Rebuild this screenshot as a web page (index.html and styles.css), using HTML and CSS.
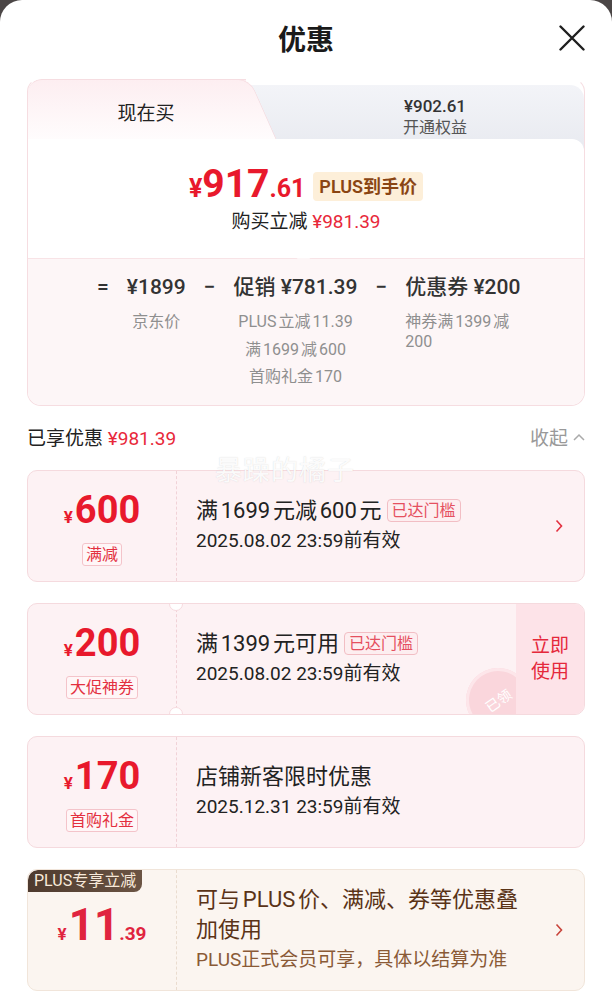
FILE: index.html
```html
<!DOCTYPE html>
<html lang="zh-CN">
<head>
    <meta charset="UTF-8">
    <title>优惠</title>
    <link rel="stylesheet" href="styles.css">
</head>
<body>
    <div class="sheet">
        <header class="header">
            <h1 class="title">优惠</h1>
            <button class="close" aria-label="关闭">
                <svg viewBox="0 0 26 26" width="26" height="26"><path d="M1.5 1.5L24.5 24.5M24.5 1.5L1.5 24.5" stroke="#1f1f1f" stroke-width="2.4" stroke-linecap="round"/></svg>
            </button>
        </header>

        <section class="summary">
            <div class="tabs">
                <div class="tab-now">现在买</div>
                <div class="tab-plus">
                    <span class="tab-price">¥902.61</span>
                    <span class="tab-sub">开通权益</span>
                </div>
            </div>
            <div class="price-panel">
                <div class="price-line">
                    <span class="price"><span class="cur">¥</span>917<span class="dec">.61</span></span>
                    <span class="plus-badge">PLUS到手价</span>
                </div>
                <div class="save-line">购买立减 <span class="red">¥981.39</span></div>
            </div>
            <div class="breakdown">
                <span class="op">=</span>
                <div class="term">
                    <div class="term-main">¥1899</div>
                    <div class="term-sub">京东价</div>
                </div>
                <span class="op">−</span>
                <div class="term">
                    <div class="term-main">促销 ¥781.39</div>
                    <div class="term-sub">PLUS立减11.39</div>
                    <div class="term-sub">满1699减600</div>
                    <div class="term-sub">首购礼金170</div>
                </div>
                <span class="op">−</span>
                <div class="term term-left">
                    <div class="term-main">优惠券 ¥200</div>
                    <div class="term-sub term-wrap">神券满1399减200</div>
                </div>
            </div>
        </section>

        <div class="enjoyed">
            <span>已享优惠 <span class="red">¥981.39</span></span>
            <span class="collapse">收起
                <svg viewBox="0 0 12 8" width="12" height="8"><path d="M1 7L6 2L11 7" fill="none" stroke="#aaa" stroke-width="1.5"/></svg>
            </span>
        </div>

        <div class="watermark">暴躁的橘子</div>

        <div class="coupons">
            <div class="coupon">
                <div class="c-left">
                    <div class="amount"><span class="cur">¥</span>600</div>
                    <span class="c-tag">满减</span>
                </div>
                <div class="c-body">
                    <div class="c-title">满1699元减600元<span class="reach">已达门槛</span></div>
                    <div class="c-date">2025.08.02 23:59前有效</div>
                </div>
                <div class="c-arrow">
                    <svg viewBox="0 0 8 14" width="8" height="14"><path d="M1.5 1.5L6.5 7L1.5 12.5" fill="none" stroke="#e3303f" stroke-width="1.6"/></svg>
                </div>
            </div>

            <div class="coupon">
                <div class="c-left notched">
                    <div class="amount"><span class="cur">¥</span>200</div>
                    <span class="c-tag">大促神券</span>
                </div>
                <div class="c-body">
                    <div class="c-title">满1399元可用<span class="reach">已达门槛</span></div>
                    <div class="c-date">2025.08.02 23:59前有效</div>
                    <div class="stamp"><span>已领</span></div>
                </div>
                <div class="c-action">立即<br>使用</div>
            </div>

            <div class="coupon">
                <div class="c-left">
                    <div class="amount"><span class="cur">¥</span>170</div>
                    <span class="c-tag">首购礼金</span>
                </div>
                <div class="c-body">
                    <div class="c-title">店铺新客限时优惠</div>
                    <div class="c-date">2025.12.31 23:59前有效</div>
                </div>
            </div>

            <div class="coupon plus">
                <span class="plus-tag">PLUS专享立减</span>
                <div class="c-left">
                    <div class="amount"><span class="cur">¥</span>11<span class="dec">.39</span></div>
                </div>
                <div class="c-body">
                    <div class="c-title">可与PLUS价、满减、券等优惠叠加使用</div>
                    <div class="c-sub">PLUS正式会员可享，具体以结算为准</div>
                </div>
                <div class="c-arrow">
                    <svg viewBox="0 0 8 14" width="8" height="14"><path d="M1.5 1.5L6.5 7L1.5 12.5" fill="none" stroke="#c8433a" stroke-width="1.6"/></svg>
                </div>
            </div>
        </div>
    </div>
</body>
</html>
```

FILE: styles.css
```css
* {
    box-sizing: border-box;
}
body {
    margin: 0;
    background: #4b4646;
    font-family: Roboto, "Noto Sans CJK SC", sans-serif;
    color: #222;
    text-autospace: normal;
}
.sheet {
    position: relative;
    min-height: 1000px;
    background: #fff;
    border-radius: 22px 22px 0 0;
    overflow: hidden;
}
.header {
    display: grid;
    grid-template-columns: 1fr auto 1fr;
    align-items: center;
    height: 75px;
    padding: 0 27px;
}
.title {
    grid-column: 2;
    margin: 0;
    font-size: 28px;
    font-weight: 700;
    color: #1a1a1a;
}
.close {
    justify-self: end;
    width: 26px;
    height: 26px;
    padding: 0;
    border: 0;
    background: none;
}
.red {
    color: #e8283a;
}

/* summary card */
.summary {
    margin: 3px 27px 0;
    border: 1px solid #f6dde1;
    border-top-color: transparent;
    border-radius: 14px;
    overflow: hidden;
    background: #fff;
}
.tabs {
    display: flex;
    height: 72px;
}
.tab-now {
    position: relative;
    z-index: 1;
    width: 218px;
    padding: 21px 0 0 18px;
    text-align: center;
    font-size: 19px;
    line-height: 26px;
    background: linear-gradient(180deg, #fdeef1, #fff);
    border-top: 1px solid #f6dde1;
    border-radius: 14px 0 0 0;
}
.tab-now::after {
    content: '';
    position: absolute;
    top: -1px;
    bottom: 0;
    right: -20px;
    width: 40px;
    background: linear-gradient(180deg, #fdeef1, #fff);
    border-top: 1px solid #f6dde1;
    border-right: 1px solid #f6dde1;
    border-radius: 0 12px 0 0;
    transform: skewX(24deg);
    z-index: -1;
}
.tab-plus {
    flex: 1;
    margin-top: 6px;
    padding: 10px 0 0 40px;
    display: flex;
    flex-direction: column;
    align-items: center;
    background: linear-gradient(180deg, #f3f4f8, #e8eaf0);
    border-radius: 0 14px 0 0;
}
.tab-price {
    font-size: 17px;
    line-height: 22px;
    font-weight: 500;
    color: #333;
}
.tab-sub {
    font-size: 16px;
    line-height: 22px;
    color: #555;
}
.price-panel {
    position: relative;
    z-index: 2;
    margin-top: -12px;
    padding: 27px 0 22px;
    text-align: center;
    background: #fff;
    border-radius: 0 12px 0 0;
}
.price-line {
    display: flex;
    justify-content: center;
    align-items: center;
    gap: 8px;
    height: 40px;
}
.price {
    color: #e8192c;
    font-weight: 700;
    font-size: 39px;
    line-height: 40px;
}
.price .cur,
.price .dec {
    font-size: 25px;
}
.plus-badge {
    height: 29px;
    padding: 0 6px;
    font-size: 18px;
    line-height: 29px;
    font-weight: 600;
    color: #8a4513;
    background: #fdefd9;
    border-radius: 4px;
    text-autospace: no-autospace;
}
.save-line {
    margin-top: 2px;
    font-size: 19px;
    line-height: 28px;
}
.breakdown {
    position: relative;
    display: flex;
    gap: 18px;
    padding: 14px 0 14px 69px;
    background: #fdf6f7;
    border-top: 1px solid #f8e3e6;
}
.breakdown::before {
    content: '';
    position: absolute;
    left: 270px;
    top: -6px;
    width: 10px;
    height: 10px;
    background: #fdf6f7;
    border-left: 1px solid #f8e3e6;
    border-top: 1px solid #f8e3e6;
    transform: rotate(45deg);
}
.op,
.term-main {
    font-size: 21px;
    line-height: 28px;
    font-weight: 500;
    color: #333;
}
.term {
    display: flex;
    flex-direction: column;
    align-items: center;
}
.term-left {
    align-items: flex-start;
}
.term-sub {
    font-size: 16px;
    line-height: 27.5px;
    color: #8f8f8f;
}
.term-main + .term-sub {
    margin-top: 7px;
}
.term-sub.term-wrap {
    width: 106px;
    margin-top: 11px;
    line-height: 20px;
}

/* enjoyed row */
.enjoyed {
    display: flex;
    justify-content: space-between;
    align-items: center;
    height: 30px;
    margin: 16px 27px 0;
    font-size: 19px;
}
.collapse {
    display: flex;
    align-items: center;
    gap: 5px;
    color: #999;
}
.watermark {
    position: absolute;
    left: 215px;
    top: 449px;
    z-index: 3;
    font-size: 27px;
    letter-spacing: 1px;
    color: rgba(255, 255, 255, 0.92);
    text-shadow: 0 0 1px rgba(140, 140, 140, 0.35);
}

/* coupons */
.coupons {
    display: flex;
    flex-direction: column;
    gap: 21px;
    margin: 18px 27px 0;
}
.coupon {
    position: relative;
    display: flex;
    height: 112px;
    background: #fdf2f4;
    border: 1px solid #f5dade;
    border-radius: 10px;
    overflow: hidden;
}
.c-left {
    position: relative;
    width: 149px;
    padding-top: 4px;
    display: flex;
    flex-direction: column;
    align-items: center;
    justify-content: center;
    gap: 6px;
    border-right: 1px dashed #f1d2d7;
}
.c-left.notched::before,
.c-left.notched::after {
    content: '';
    position: absolute;
    right: -7px;
    width: 12px;
    height: 12px;
    background: #fff;
    border: 1px solid #f5dade;
    border-radius: 50%;
}
.c-left.notched::before {
    top: -7px;
}
.c-left.notched::after {
    bottom: -7px;
}
.amount {
    color: #e8192c;
    font-size: 38px;
    line-height: 40px;
    font-weight: 700;
}
.amount .cur {
    font-size: 17px;
    margin-right: 2px;
}
.c-tag {
    padding: 0 3px;
    font-size: 16px;
    line-height: 21px;
    color: #e3303f;
    background: #fff6f7;
    border: 1px solid #f4c4ca;
    border-radius: 3px;
}
.c-body {
    position: relative;
    flex: 1;
    padding-left: 19px;
    display: flex;
    flex-direction: column;
    justify-content: center;
}
.c-title {
    display: flex;
    align-items: center;
    font-size: 22px;
    line-height: 30px;
    color: #222;
}
.reach {
    margin-left: 5px;
    padding: 0 4px;
    font-size: 16px;
    line-height: 21px;
    color: #e5505f;
    background: #fdeef0;
    border: 1px solid #f2bec4;
    border-radius: 4px;
}
.c-date {
    font-size: 19px;
    line-height: 30px;
    color: #222;
    text-autospace: no-autospace;
}
.c-arrow {
    width: 50px;
    display: flex;
    align-items: center;
    justify-content: center;
}
.c-action {
    position: relative;
    z-index: 1;
    width: 68px;
    display: flex;
    align-items: center;
    justify-content: center;
    text-align: center;
    font-size: 19px;
    line-height: 26px;
    color: #e5283b;
    background: #fde3e8;
}
.stamp {
    position: absolute;
    left: 289px;
    top: 64px;
    width: 64px;
    height: 64px;
    display: flex;
    align-items: center;
    justify-content: center;
    border-radius: 50%;
    background: #fad6dc;
    box-shadow: inset 0 0 0 3px #fde6ea;
    color: #fff;
    font-size: 14px;
    transform: rotate(-35deg);
}

/* plus coupon */
.coupon.plus {
    height: 122px;
    background: #fbf5f0;
    border-color: #f1e5da;
}
.plus .c-left {
    padding-top: 0;
    border-right-color: #eadccf;
}
.plus .amount {
    color: #e0243f;
    font-size: 44px;
    line-height: 46px;
}
.plus .amount .dec {
    font-size: 19px;
}
.plus-tag {
    position: absolute;
    left: 0;
    top: 0;
    z-index: 1;
    padding: 0 6px;
    font-size: 16px;
    line-height: 22px;
    color: #f8e9da;
    background: linear-gradient(90deg, #4e3a2e, #6b5444);
    border-radius: 10px 0 8px 0;
    text-autospace: no-autospace;
}
.plus .c-title {
    display: block;
    max-width: 330px;
    color: #5a3317;
}
.c-sub {
    font-size: 19px;
    line-height: 29px;
    color: #8a5a36;
    text-autospace: no-autospace;
}
```
